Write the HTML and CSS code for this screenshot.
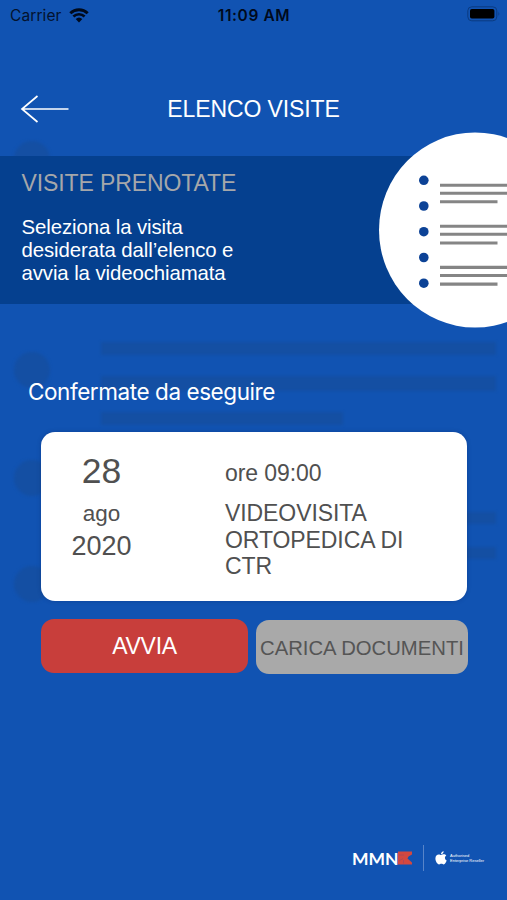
FILE: index.html
```html
<!DOCTYPE html>
<html lang="it">
<head>
    <meta charset="UTF-8">
    <meta name="viewport" content="width=device-width, initial-scale=1.0">
    <title>Elenco visite</title>
    <link rel="stylesheet" href="styles.css">
</head>
<body>
    <div class="screen">
        <svg class="backdrop" width="507" height="900" viewBox="0 0 507 900">
            <circle cx="32" cy="159" r="18"/>
            <circle cx="32" cy="370" r="18"/>
            <circle cx="32" cy="478" r="18"/>
            <circle cx="32" cy="584" r="18"/>
            <path d="M101 342h395v13H101zM101 376h395v15H101zM101 412h242v13H101zM101 512h395v12H101zM101 547h395v12H101z"/>
        </svg>

        <div class="status-bar">
            <div class="carrier">
                <span>Carrier</span>
                <svg width="20" height="15" viewBox="0 0 20 15">
                    <path d="M1.300 5.200a12.600 12.600 0 0 1 17.400 0" fill="none" stroke="#000a1c" stroke-width="2.900"/>
                    <path d="M4.400 8.500a8.100 8.100 0 0 1 11.200 0" fill="none" stroke="#000a1c" stroke-width="2.700"/>
                    <path d="M10 14.400L6.700 11.100a4.800 4.800 0 0 1 6.600 0z" fill="#000a1c"/>
                </svg>
            </div>
            <div class="clock">11:09 AM</div>
            <svg class="battery" width="34" height="16" viewBox="0 0 34 16">
                <rect x=".8" y=".8" width="29" height="14" rx="4" fill="none" stroke="#0b3b80"/>
                <rect x="3" y="3" width="24.400" height="9.600" rx="1.800" fill="#000"/>
                <path d="M31.500 5.500q1.600 2.200 0 4.600z" fill="#0b3b80"/>
            </svg>
        </div>

        <div class="header">
            <svg class="back" width="50" height="30" viewBox="0 0 50 30">
                <path d="M17.500 2L2 15l15.500 13M2 15h46.500" fill="none" stroke="#fff" stroke-width="1.700"/>
            </svg>
            <h1>ELENCO VISITE</h1>
        </div>

        <div class="banner">
            <div class="banner-text">
                <h2>VISITE PRENOTATE</h2>
                <p>Seleziona la visita<br>desiderata dall’elenco e<br>avvia la videochiamata</p>
            </div>
            <svg class="list-icon" width="128" height="196" viewBox="0 0 128 196">
                <ellipse cx="96" cy="98" rx="96" ry="97.500" fill="#fff"/>
                <g fill="#0c4296">
                    <circle cx="44.800" cy="48.300" r="4.800"/>
                    <circle cx="44.800" cy="74" r="4.800"/>
                    <circle cx="44.800" cy="99.700" r="4.800"/>
                    <circle cx="44.800" cy="125.500" r="4.800"/>
                    <circle cx="44.800" cy="151.200" r="4.800"/>
                </g>
                <path d="M61 53.300h67M61 61.300h67M61 69.800h57.500M61 94.300h67M61 102.300h67M61 111h57.500M61 135.400h67M61 143.500h67M61 152.100h57.500" stroke="#858585" stroke-width="3.100"/>
            </svg>
        </div>

        <h3 class="section-title">Confermate da eseguire</h3>

        <div class="card">
            <div class="date">
                <div class="day">28</div>
                <div class="month">ago</div>
                <div class="year">2020</div>
            </div>
            <div class="details">
                <div class="time">ore 09:00</div>
                <div class="visit">VIDEOVISITA<br>ORTOPEDICA DI<br>CTR</div>
            </div>
        </div>

        <div class="actions">
            <button class="btn btn-start" type="button">AVVIA</button>
            <button class="btn btn-upload" type="button">CARICA DOCUMENTI</button>
        </div>

        <div class="footer">
            <span class="brand">MMN</span>
            <svg class="brand-mark" width="14" height="14" viewBox="0 0 14 14">
                <path d="M0 .5h14v3L10.500 5.500 9.500 7.500l4.500 4v2H0z" fill="#d34840"/>
                <path d="M1 4h5M1 10l4-2.500M5.500 12.500V9" stroke="#a8465a" stroke-width=".8"/>
            </svg>
            <span class="divider"></span>
            <svg class="apple" width="12" height="14" viewBox="0 0 12 14">
                <path d="M8.700.3c.1 1.500-1.200 2.900-2.700 2.900C5.900 1.800 7.200.5 8.700.3zM6.200 4c.6 0 1.400-.7 2.600-.7 1 0 1.900.5 2.500 1.300-2 1.200-1.700 4 .4 4.900-.6 1.700-1.700 3.900-3 3.900-.9 0-1.200-.6-2.300-.6s-1.500.6-2.300.6C2.400 13.400.4 10.300.4 7.500c0-2.600 1.600-4.100 3.300-4.100 1.100 0 1.900.6 2.500.6z" fill="#fff"/>
            </svg>
            <span class="reseller">Authorised<br>Enterprise Reseller</span>
        </div>
    </div>
</body>
</html>
```
FILE: styles.css
```css
* {
    margin: 0;
    padding: 0;
    box-sizing: border-box;
}
body {
    font-family: 'Liberation Sans', Arial, sans-serif;
    background: #1153b2;
    color: #fff;
}
svg {
    display: block;
    flex-shrink: 0;
}
.screen {
    position: relative;
    z-index: 0;
    width: 507px;
    height: 900px;
    overflow: hidden;
    display: flex;
    flex-direction: column;
}
/* faded list artwork behind the content */
.backdrop {
    position: absolute;
    top: 0;
    left: 0;
    z-index: -1;
    fill: #144fa3;
    filter: blur(1.5px);
}
.status-bar {
    display: grid;
    grid-template-columns: 1fr auto 1fr;
    align-items: center;
    height: 30px;
    padding: 0 6px 0 10px;
    font-family: Inter, sans-serif;
    font-size: 15.5px;
    color: #03122e;
}
.carrier {
    display: flex;
    align-items: center;
    gap: 7px;
    letter-spacing: 0.1px;
}
.clock {
    margin-right: 3px;
    font-weight: 600;
    color: #000a1c;
    letter-spacing: 0.6px;
}
.battery {
    justify-self: end;
    margin-bottom: 2px;
}
.header {
    display: grid;
    grid-template-columns: 60px 1fr 60px;
    align-items: center;
    height: 126px;
    padding: 0 20px;
    padding-top: 32px;
}
h1 {
    font-size: 23px;
    font-weight: normal;
    text-align: center;
    letter-spacing: -0.1px;
}
.banner {
    display: flex;
    justify-content: space-between;
    align-items: flex-start;
    height: 148px;
    padding-left: 21.5px;
    background: #05408f;
}
h2 {
    margin-top: 14px;
    font-size: 23px;
    font-weight: normal;
    line-height: 26px;
    letter-spacing: -0.1px;
    color: #a5a7aa;
}
.banner p {
    margin-top: 20px;
    font-size: 20.4px;
    line-height: 23.2px;
    letter-spacing: -0.1px;
}
.list-icon {
    margin-top: -24px;
}
.section-title {
    margin: 74px 0 0 28px;
    font-family: Inter, sans-serif;
    font-size: 22.5px;
    font-weight: normal;
    line-height: 28px;
    letter-spacing: -0.43px;
}
.card {
    display: flex;
    width: 426px;
    height: 169px;
    margin: 26px 0 0 41px;
    border-radius: 14px;
    background: #fff;
    color: #505050;
    box-shadow: 0 0 4px rgba(0, 30, 90, 0.3);
}
.date {
    width: 121px;
    padding-top: 19px;
    text-align: center;
}
.day {
    font-size: 35.5px;
    line-height: 40px;
}
.month {
    margin-top: 10px;
    font-size: 22.5px;
    line-height: 26px;
}
.year {
    margin-top: 3px;
    font-size: 27px;
    line-height: 32px;
}
.details {
    padding: 28px 0 0 63px;
    font-size: 23px;
    line-height: 26.3px;
    letter-spacing: -0.08px;
}
.visit {
    margin-top: 14px;
}
.actions {
    display: flex;
    align-items: flex-start;
    gap: 8px;
    margin: 18px 0 0 41px;
}
.btn {
    height: 54px;
    border: none;
    border-radius: 13px;
    font-family: inherit;
    white-space: nowrap;
}
.btn-start {
    width: 207px;
    background: #c83e3b;
    color: #fff;
    font-size: 23px;
    letter-spacing: -0.3px;
}
.btn-upload {
    width: 212px;
    margin-top: 1px;
    padding-top: 2px;
    background: #a9a9a9;
    color: #555;
    font-size: 20.3px;
}
.footer {
    display: flex;
    align-items: center;
    height: 26px;
    margin: auto 0 29px 352px;
}
.brand {
    width: 46px;
    font-family: Lato, sans-serif;
    font-size: 17.5px;
    font-weight: bold;
}
.divider {
    width: 1px;
    height: 26px;
    margin: 0 11px;
    background: #5784c9;
}
.reseller {
    margin-left: 3px;
    font-size: 4px;
    line-height: 5.5px;
    white-space: nowrap;
}
```
